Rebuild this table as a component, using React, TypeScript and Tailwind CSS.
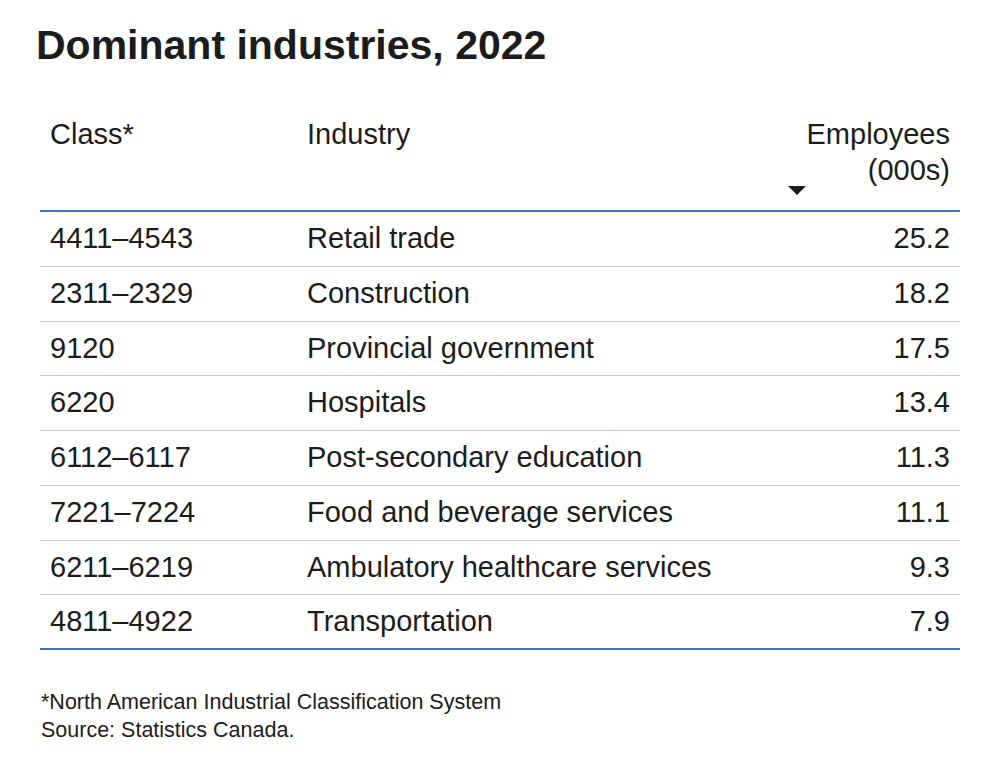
import React from 'react';

const rows = [
  { cls: '4411–4543', industry: 'Retail trade', emp: '25.2' },
  { cls: '2311–2329', industry: 'Construction', emp: '18.2' },
  { cls: '9120', industry: 'Provincial government', emp: '17.5' },
  { cls: '6220', industry: 'Hospitals', emp: '13.4' },
  { cls: '6112–6117', industry: 'Post-secondary education', emp: '11.3' },
  { cls: '7221–7224', industry: 'Food and beverage services', emp: '11.1' },
  { cls: '6211–6219', industry: 'Ambulatory healthcare services', emp: '9.3' },
  { cls: '4811–4922', industry: 'Transportation', emp: '7.9' },
];

const App: React.FC = () => {
  return (
    <div className="min-h-screen bg-white text-[#1c1c1c] font-['Liberation_Sans',Arial,sans-serif]">
      <div className="w-[1004px] pt-[25px]">
        <h1 className="pl-[36px] text-[41px] font-bold leading-[41px]">
          Dominant industries, 2022
        </h1>

        <div className="ml-[40px] mt-[50px] w-[920px]">
          <div className="flex h-[96px] border-b-2 border-[#3a74c7] text-[29px] leading-[36px]">
            <div className="w-[267px] pl-[10px]">Class*</div>
            <div className="flex-1">Industry</div>
            <div className="relative w-[200px] pr-[10px] text-right">
              Employees
              <br />
              (000s)
              <span className="absolute left-[28px] top-[70px] h-0 w-0 border-x-[9px] border-t-[9px] border-x-transparent border-t-[#1c1c1c]" />
            </div>
          </div>
          {rows.map((r, i) => (
            <div
              key={r.cls}
              className={
                i === rows.length - 1
                  ? 'flex h-[54.75px] items-center border-b-2 border-[#3a74c7] text-[29px]'
                  : 'flex h-[54.75px] items-center border-b border-[#c8c8c8] text-[29px]'
              }
            >
              <div className="w-[267px] pl-[10px]">{r.cls}</div>
              <div className="flex-1">{r.industry}</div>
              <div className="w-[200px] pr-[10px] text-right">{r.emp}</div>
            </div>
          ))}
        </div>

        <div className="mt-[38px] pl-[41px] text-[21.5px] leading-[28px]">
          <p>*North American Industrial Classification System</p>
          <p>Source: Statistics Canada.</p>
        </div>
      </div>
    </div>
  );
};

export default App;
